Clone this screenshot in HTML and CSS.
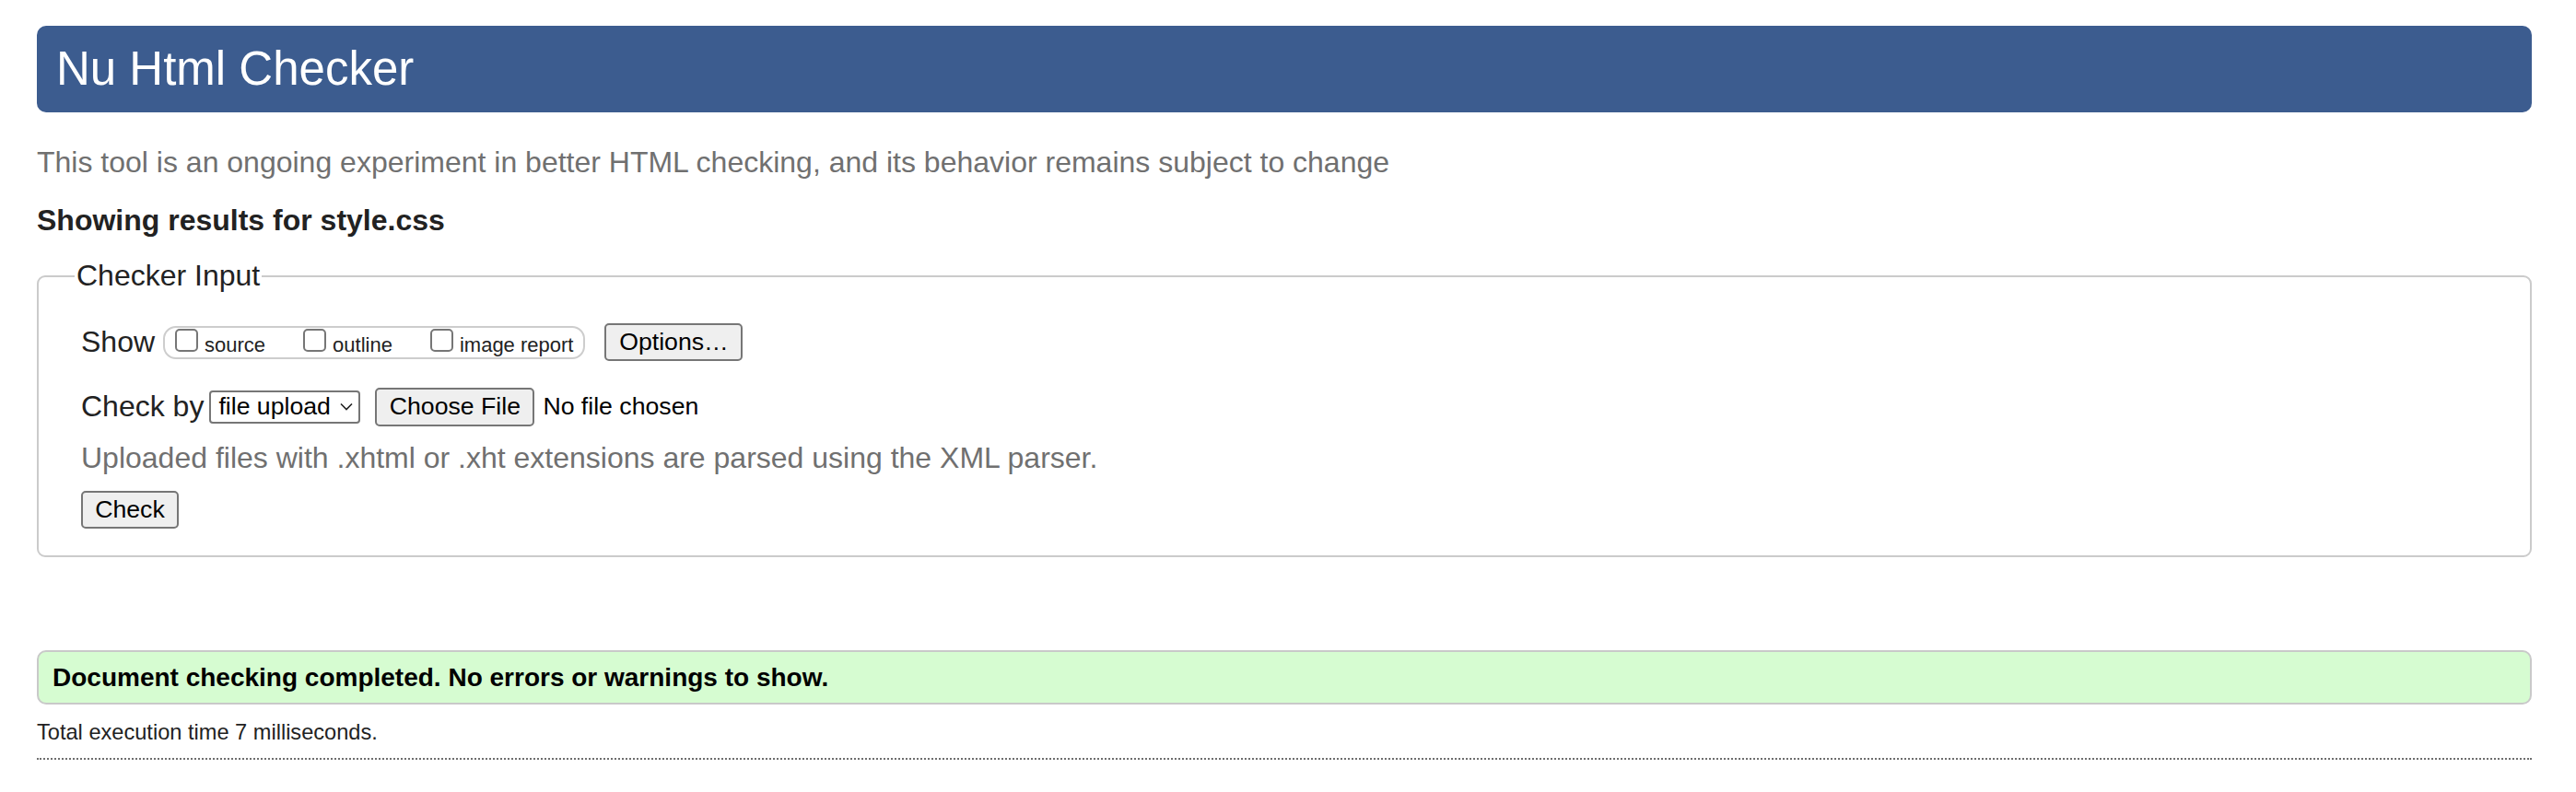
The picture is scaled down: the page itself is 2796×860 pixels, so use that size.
FILE: index.html
```
<!DOCTYPE html>
<html lang="en">
<head>
<meta charset="utf-8">
<title>Showing results for style.css - Nu Html Checker</title>
<link rel="stylesheet" href="styles.css">
</head>
<body>
<h1 class="banner">Nu Html Checker</h1>
<p class="intro">This tool is an ongoing experiment in better HTML checking, and its behavior remains subject to change</p>
<p class="showing">Showing results for style.css</p>
<fieldset class="input-box">
  <legend class="legend">Checker Input</legend>
  <div class="row row-show">
    <span class="label">Show</span>
    <div class="opts">
      <label class="opt"><input type="checkbox" class="cb"><span class="opt-text">source</span></label>
      <label class="opt"><input type="checkbox" class="cb"><span class="opt-text">outline</span></label>
      <label class="opt"><input type="checkbox" class="cb"><span class="opt-text">image report</span></label>
    </div>
    <button class="btn btn-options" type="button">Options…</button>
  </div>
  <div class="row row-checkby">
    <span class="label">Check by</span>
    <span class="select">file upload<svg class="chev" width="14" height="9" viewBox="0 0 14 9"><polyline points="1,1.5 7,7.5 13,1.5" fill="none" stroke="#222" stroke-width="1.6"/></svg></span>
    <button class="btn btn-file" type="button">Choose File</button>
    <span class="nofile">No file chosen</span>
  </div>
  <p class="hint">Uploaded files with .xhtml or .xht extensions are parsed using the XML parser.</p>
  <div class="row row-submit">
    <button class="btn btn-check" type="button">Check</button>
  </div>
</fieldset>
<div class="success">Document checking completed. No errors or warnings to show.</div>
<p class="stats">Total execution time 7 milliseconds.</p>
<hr class="rule">
</body>
</html>
```
FILE: styles.css
```
html, body {
  background: #ffffff;
}
body {
  margin: 0;
  padding: 28px 48px 0 40px;
  font-family: "Liberation Sans", Arial, Helvetica, sans-serif;
  font-size: 32px;
  color: #222222;
}
.banner {
  margin: 0;
  height: 94px;
  line-height: 94px;
  padding: 0 0 0 21px;
  background: #3c5c8f;
  color: #ffffff;
  font-size: 51px;
  font-weight: normal;
  border-radius: 10px;
}
.intro {
  margin: 36px 0 0 0;
  line-height: 37px;
  color: #707070;
}
.showing {
  margin: 26px 0 0 0;
  line-height: 37px;
  font-weight: bold;
  color: #222222;
}
.input-box {
  margin: 23px 0 0 0;
  padding: 33px 20px 29px 46px;
  border: 2px solid #cbcbcb;
  border-radius: 9px;
  min-width: 0;
}
.legend {
  padding: 0 2px;
  margin-left: -7px;
  line-height: 37px;
  color: #222222;
}
.row {
  display: flex;
  align-items: center;
}
.row-show {
  height: 41px;
}
.row-checkby {
  margin-top: 29px;
  height: 41px;
}
.label {
  line-height: 37px;
  color: #222222;
}
.opts {
  display: flex;
  align-items: center;
  box-sizing: border-box;
  height: 36px;
  margin-left: 9px;
  padding: 0 11px;
  border: 2px solid #cdcdcd;
  border-radius: 14px;
}
.opt {
  display: inline-block;
  white-space: nowrap;
  font-size: 22px;
  line-height: 25px;
  color: #222222;
  margin-right: 41px;
}
.opt:last-child {
  margin-right: 0;
}
.cb {
  -webkit-appearance: none;
  appearance: none;
  box-sizing: border-box;
  width: 25px;
  height: 25px;
  margin: 0 7px 0 0;
  border: 2px solid #767676;
  border-radius: 5px;
  background: #ffffff;
  vertical-align: baseline;
}
.btn {
  box-sizing: border-box;
  height: 41px;
  margin: 0;
  padding: 0 13px;
  font-family: "Liberation Sans", Arial, Helvetica, sans-serif;
  font-size: 26.67px;
  color: #000000;
  background: #efefef;
  border: 2px solid #767676;
  border-radius: 5px;
}
.btn-options {
  width: 150px;
  margin-left: 21px;
}
.select {
  box-sizing: border-box;
  display: inline-flex;
  align-items: center;
  height: 36px;
  width: 164px;
  margin-left: 6px;
  padding: 0 0 0 8px;
  font-size: 26.67px;
  color: #000000;
  background: #ffffff;
  border: 2px solid #767676;
  border-radius: 4px;
}
.chev {
  margin-left: 10px;
}
.btn-file {
  width: 173px;
  height: 42px;
  margin-left: 16px;
}
.nofile {
  margin-left: 9px;
  font-size: 26.67px;
  color: #000000;
}
.hint {
  margin: 17px 0 0 0;
  line-height: 37px;
  color: #707070;
}
.row-submit {
  margin-top: 17px;
}
.btn-check {
  width: 106px;
}
.success {
  box-sizing: border-box;
  display: flex;
  align-items: center;
  height: 59px;
  margin-top: 101px;
  padding: 0 15px;
  background: #d6fcd1;
  border: 2px solid #c9c9c9;
  border-radius: 10px;
  font-size: 28px;
  font-weight: bold;
  color: #000000;
}
.stats {
  margin: 17px 0 0 0;
  font-size: 23.6px;
  line-height: 27px;
  color: #222222;
}
.rule {
  margin: 14px 0 0 0;
  height: 0;
  border: 0;
  border-top: 2px dotted #6e6e6e;
}
```
